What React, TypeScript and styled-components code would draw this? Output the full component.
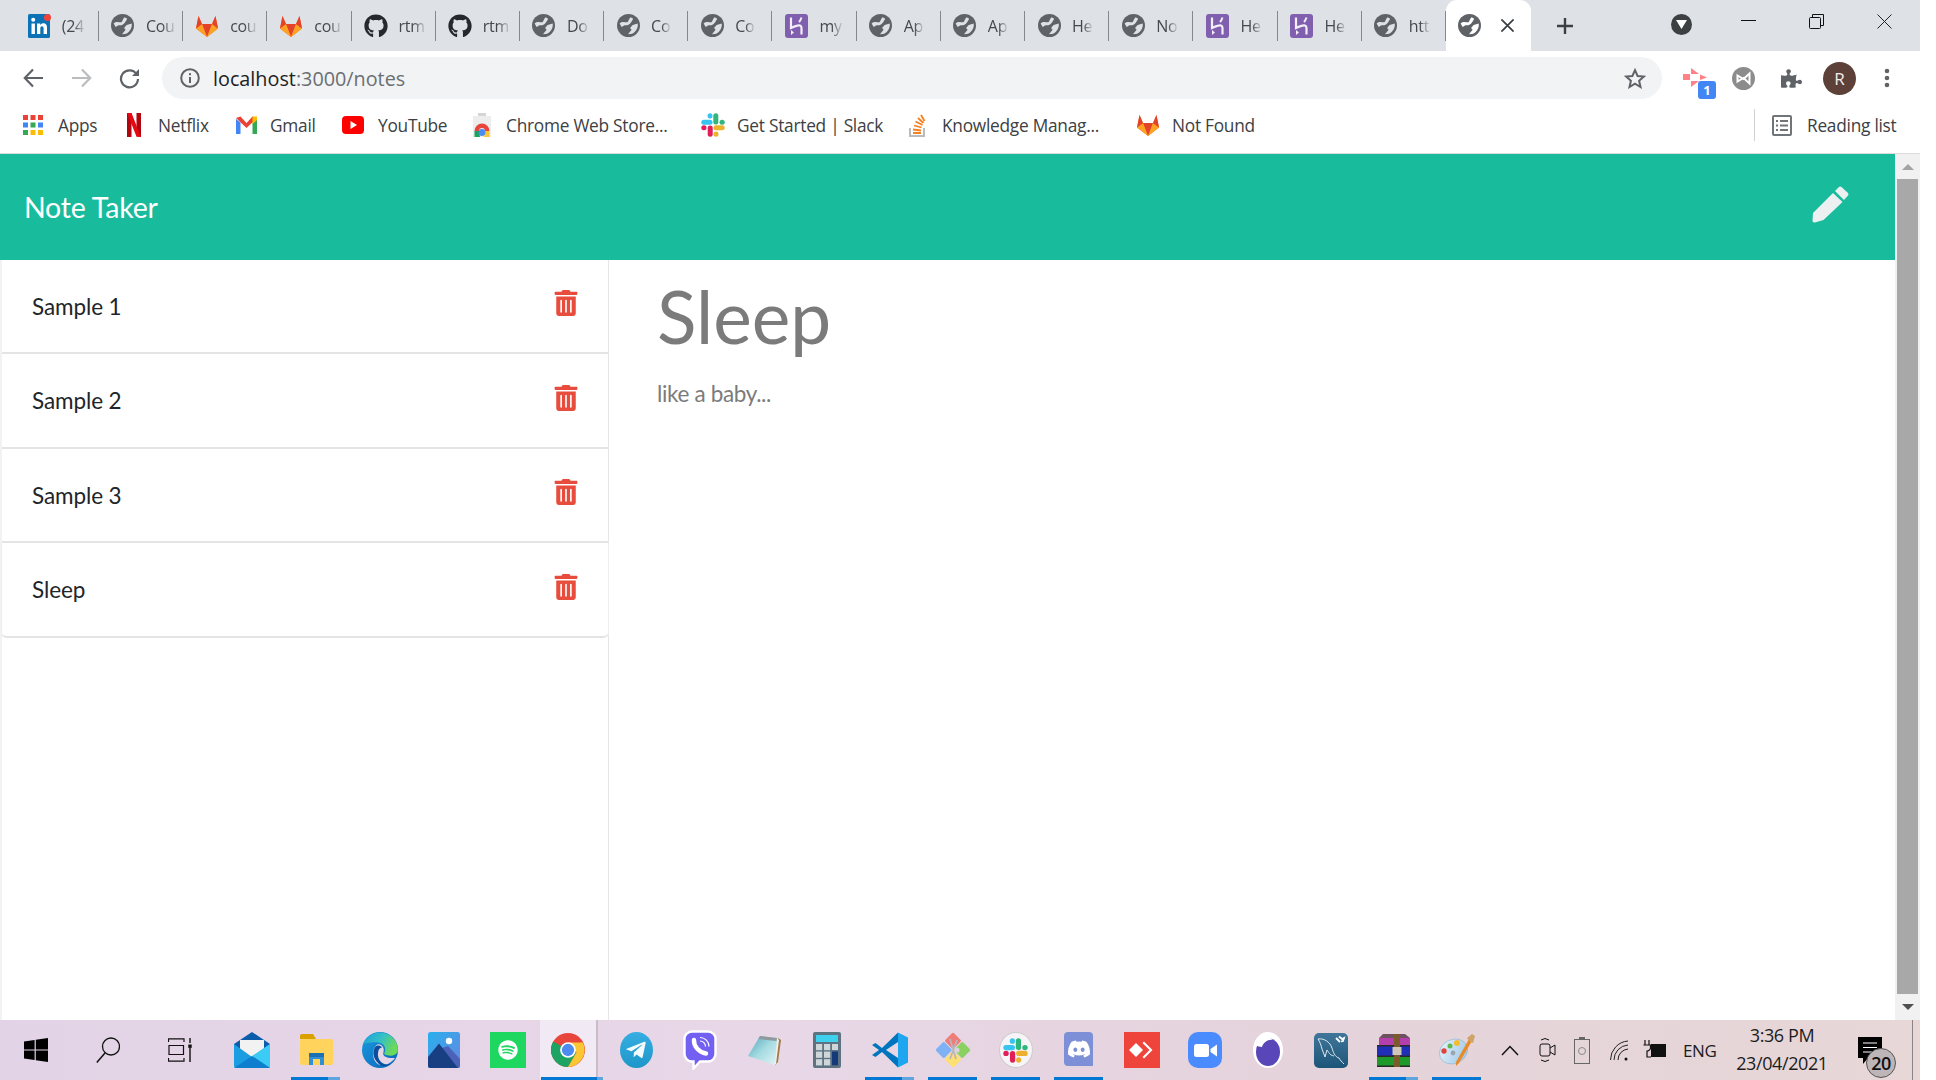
import React from "react";
import styled, { createGlobalStyle } from "styled-components";
import { FaGithub, FaTrashAlt, FaPuzzlePiece, FaSpotify, FaDiscord, FaTelegramPlane } from "react-icons/fa";

const GlobalStyle = createGlobalStyle`
  html, body { margin: 0; padding: 0; background: #fff; }
  #root { width: 1920px; height: 1080px; overflow: hidden; }
`;

const UI = `"Open Sans", "Noto Sans", sans-serif`;
const PAGE = `Lato, "Open Sans", sans-serif`;

const Screen = styled.div`
  width: 1920px; height: 1080px; display: flex; flex-direction: column; font-family: ${UI};
`;
const TabStrip = styled.div`
  height: 51px; background: #dee1e6; display: flex; align-items: flex-start; padding-left: 14.8px; box-sizing: border-box;
`;
const Tab = styled.div`
  width: 84.2px; height: 51px; box-sizing: border-box; flex: none; display: flex; align-items: center; padding-left: 12px; gap: 11px;
  position: relative;
  &::after { content: ""; position: absolute; right: 0; top: 11px; height: 30px; width: 1px; background: #85888d; }
`;
const ActiveTab = styled.div`
  width: 85px; height: 51px; flex: none; box-sizing: border-box; background: #fff; border-radius: 11px 11px 0 0; display: flex; align-items: center;
  padding-left: 12px; gap: 19px; color: #3c4043;
`;
const TabTitle = styled.span`
  font-size: 16px; color: #45494e; white-space: nowrap; letter-spacing: -0.3px;
  -webkit-mask-image: linear-gradient(to right, #000 55%, rgba(0,0,0,.15) 100%); mask-image: linear-gradient(to right, #000 55%, rgba(0,0,0,.15) 100%);
`;
const FavSlot = styled.span`
  position: relative; width: 24px; height: 24px; flex: none; display: flex; align-items: center; justify-content: center; color: #24292e;
`;
const RedDot = styled.span`
  position: absolute; right: 0; top: 0; width: 7px; height: 7px; border-radius: 50%; background: #f0433a;
`;
const NewTab = styled.div`
  margin-left: 25px; height: 51px; display: flex; align-items: center; color: #3c4043;
`;
const StripSpacer = styled.div`
  width: 96.8px; flex: none;
`;
const TabSearch = styled.div`
  width: 21px; height: 21px; margin-top: 14px; border-radius: 50%; background: #3c4043; display: flex; align-items: center; justify-content: center; flex: none;
`;
const WinButtons = styled.div`
  margin-left: 49px; display: flex; align-items: center; height: 43px; gap: 53px; flex: none;
`;
const MinimizeSlot = styled.span`
  display: flex; margin-top: -3px;
`;
const Toolbar = styled.div`
  height: 51px; background: #fff; display: flex; align-items: center; box-sizing: border-box; padding: 3px 0 0 23px;
`;
const NavBtn = styled.span<{ $gap?: number }>`
  display: flex; margin-right: ${(p) => p.$gap ?? 27}px; flex: none;
`;
const Omnibox = styled.div`
  width: 1500px; height: 42px; border-radius: 21px; background: #f1f3f4; display: flex; align-items: center;
  box-sizing: border-box; padding: 0 16px 0 18px; flex: none;
`;
const UrlText = styled.span`
  margin-left: 13px; font-size: 19.8px; color: #6b6f73; flex: 1;
`;
const UrlHost = styled.span`
  color: #202124;
`;
const ToolIcons = styled.div`
  display: flex; align-items: center; margin-left: 19px;
`;
const ExtSlot = styled.span<{ $w: number; $pr?: number }>`
  position: relative; width: ${(p) => p.$w}px; padding-right: ${(p) => p.$pr ?? 0}px; box-sizing: border-box; display: flex; justify-content: center; align-items: center; flex: none;
`;
const ExtBadge = styled.span`
  position: absolute; right: 1px; bottom: -11px; width: 18px; height: 18px; border-radius: 3px; background: #4285f4; color: #fff;
  font: 700 13px/18px ${UI}; text-align: center;
`;
const Avatar = styled.span`
  width: 33px; height: 33px; border-radius: 50%; background: #5d4037; color: #f3ecea; font-size: 17px; display: flex; align-items: center; justify-content: center; flex: none;
`;
const Bookmarks = styled.div`
  height: 52px; box-sizing: border-box; background: #fff; border-bottom: 1px solid #dcdcdc; display: flex; align-items: center; padding: 0 0 5px 23px;
`;
const Bookmark = styled.div<{ $gap: number; $w: number }>`
  display: flex; align-items: center; width: ${(p) => p.$w}px; flex: none; font-size: 17.3px; color: #3c4043; letter-spacing: -0.25px; white-space: nowrap;
  span:first-child { margin-right: ${(p) => p.$gap}px; display: flex; }
`;
const ReadingList = styled.div`
  margin-left: auto; width: 166px; box-sizing: border-box; height: 32px; display: flex; align-items: center; border-left: 1px solid #cfd1d4; padding-left: 17px;
  gap: 15px; font-size: 17.3px; letter-spacing: -0.25px; color: #3c4043; white-space: nowrap;
`;
const PageArea = styled.div`
  height: 866px; display: flex; flex: none;
`;
const AppColumn = styled.div`
  width: 1895px; display: flex; flex-direction: column; flex: none; background: #fff; font-family: ${PAGE};
`;
const NavBar = styled.header`
  height: 106px; flex: none; background: #18bc9c; display: flex; justify-content: space-between; align-items: flex-start; box-sizing: border-box;
  padding: 32px 46px 0 24px;
`;
const Brand = styled.h1`
  margin: 1px 0 0; font: 400 28.5px/40px ${PAGE}; color: #fff; letter-spacing: -0.2px;
`;
const PencilBtn = styled.span`
  display: flex;
`;
const Workspace = styled.main`
  flex: 1; display: flex; min-height: 0;
`;
const Sidebar = styled.aside`
  width: 609px; flex: none; box-sizing: border-box; border-right: 1px solid #e6e6e6; border-left: 2px solid #f2f2f2;
`;
const NoteRow = styled.div<{ $h: number; $last?: boolean }>`
  height: ${(p) => p.$h}px; box-sizing: border-box; border-bottom: 2px solid #e4e4e4; display: flex; align-items: center; justify-content: space-between;
  padding: 0 29px 0 30px; font-size: 22.5px; color: #212529; letter-spacing: -0.1px;
  border-radius: ${(p) => (p.$last ? "0 0 5px 5px" : "0")};
  ${(p) => p.$last && "box-shadow: 1px 0 0 #eee, -1px 0 0 #eee;"}
`;
const TrashBtn = styled.span`
  color: #e74c3c; font-size: 26px; display: flex; margin-top: -6px;
`;
const NoteView = styled.article`
  flex: 1; padding: 0 0 0 48px;
`;
const NoteTitle = styled.h2`
  margin: 14px 0 0; font: 400 73px/85px ${PAGE}; color: #7b7b7b;
`;
const NoteBody = styled.p`
  margin: 19px 0 0; font: 400 22.5px/32px ${PAGE}; color: #7b7b7b; letter-spacing: -0.35px;
`;
const ScrollTrack = styled.div`
  width: 25px; flex: none; background: #f1f1f1; display: flex; flex-direction: column; align-items: center; box-sizing: border-box;
`;
const ScrollArrow = styled.div<{ $up?: boolean }>`
  width: 0; height: 0; flex: none; border-left: 6px solid transparent; border-right: 6px solid transparent;
  ${(p) => (p.$up ? "border-bottom: 6px solid #a3a3a3; margin: 10px 0 9px;" : "border-top: 6px solid #505050; margin: 10px 0 0;")}
`;
const ScrollThumb = styled.div`
  width: 21px; height: 815px; flex: none; background: #a8a8a8;
`;
const Taskbar = styled.footer`
  height: 60px; flex: none; position: relative; display: flex; align-items: center;
  background: linear-gradient(90deg, #e2d3e6 0%, #e8d7e7 40%, #e4d3da 70%, #e7d7d7 100%);
`;
const StartCell = styled.div`
  width: 72px; flex: none; display: flex; justify-content: center; align-items: center; height: 60px;
`;
const AppCell = styled.div<{ $w: number; $active?: boolean; $after?: number }>`
  width: ${(p) => p.$w}px; margin-right: ${(p) => p.$after ?? 0}px; flex: none; height: 60px; display: flex; justify-content: center; align-items: center; position: relative;
  ${(p) => p.$active && "background: #f1e9f3; box-sizing: border-box; border-right: 2px solid #c9bdcb;"}
`;
const RunLine = styled.span<{ $split?: boolean; $chrome?: boolean }>`
  position: absolute; left: ${(p) => (p.$chrome ? 1 : 7)}px; bottom: 0; height: 3px; width: ${(p) => (p.$chrome ? 62 : 49)}px;
  background: ${(p) => (p.$split ? "linear-gradient(90deg, #0078d4 76%, #5ea5e0 76%)" : p.$chrome ? "linear-gradient(90deg, #0078d4 90%, #5ea5e0 90%)" : "#0078d4")};
`;
const TaskGap = styled.div`
  width: 4px; flex: none;
`;
const Tray = styled.div`
  display: flex; align-items: center; flex: none; height: 60px; color: #111;
`;
const TrayItem = styled.span<{ $ml: number }>`
  margin-left: ${(p) => p.$ml}px; display: flex; flex: none;
`;
const Lang = styled.span`
  font-size: 17px; color: #1c1c1c; width: 33px; margin-left: 16px; text-align: center; letter-spacing: -0.4px; flex: none;
`;
const Clock = styled.div`
  width: 110px; margin-left: 11px; text-align: center; font-size: 18px; line-height: 28px; color: #1c1c1c; flex: none; letter-spacing: -0.4px; padding-bottom: 2px;
`;
const Notify = styled.div`
  position: relative; margin-left: 21px; width: 40px; height: 44px; box-sizing: border-box; padding-top: 9px; flex: none; display: flex;
`;
const NotifyCount = styled.span`
  position: absolute; left: 8px; top: 20px; width: 30px; height: 30px; border-radius: 50%; background: #bdb5b8; border: 1px solid #555; box-sizing: border-box;
  font-size: 18px; line-height: 28px; text-align: center; color: #111; letter-spacing: -0.6px; font-weight: 600;
`;
const EdgeLine = styled.span`
  position: absolute; right: 7px; top: 0; width: 1px; height: 60px; background: #8d8488;
`;

const Globe = ({ bg = "#dee1e6" }: { bg?: string }) => (
  <svg width="23" height="23" viewBox="0 0 22 22">
    <circle cx="11" cy="11" r="11" fill="#5f6368" />
    <path d="M2.5 9 C5 6.5 8 8 10 8 C11 7 11 5 13 3 L15.5 4.5 C14 7 13 9.5 10.5 10.5 C9 11.5 8 9.5 4.5 12.5 Z" fill={bg} />
    <path d="M19.8 9 L15 10.5 L12.5 13.5 L14 15 L10.5 19.3 L14.5 18.8 C18 17 20.5 13 19.8 9 Z" fill={bg} />
  </svg>
);
const GitLab = ({ s = 24 }: { s?: number }) => (
  <svg width={s} height={s} viewBox="0 0 24 24">
    <path d="M12 23 L1 14.5 L3.5 2 L7 10 H17 L20.5 2 L23 14.5 Z" fill="#fc6d26" />
    <path d="M12 23 L7 10 H17 Z" fill="#e24329" />
    <path d="M1 14.5 L7 10 L12 23 Z M23 14.5 L17 10 L12 23 Z" fill="#fca326" />
    <path d="M3.5 2 L7 10 L1 14.5 Z M20.5 2 L17 10 L23 14.5 Z" fill="#e24329" />
  </svg>
);
const Heroku = () => (
  <svg width="23" height="24" viewBox="0 0 23 24">
    <rect width="23" height="24" rx="3" fill="#7f5fae" />
    <path d="M6 3.5 V14 C9 12.5 13 11 15 11.5 C16.5 12 16.5 13 16.5 14 V20.5" fill="none" stroke="#f3eef8" strokeWidth="2.2" />
    <path d="M14 8 C15.5 6.5 16 5 16.5 3.5" fill="none" stroke="#f3eef8" strokeWidth="2" />
    <path d="M6 16 L9 18.5 L6 21 Z" fill="#f3eef8" />
  </svg>
);
const LinkedIn = () => (
  <svg width="22" height="24" viewBox="0 0 22 24">
    <rect width="22" height="24" rx="1.5" fill="#0a72b5" />
    <rect x="3.5" y="9.5" width="3.4" height="10.5" fill="#fff" />
    <circle cx="5.2" cy="5.8" r="2" fill="#fff" />
    <path d="M9 9.5 H12.2 V11 C13 9.8 14.2 9.3 15.5 9.3 C18 9.3 19 11 19 13.5 V20 H15.6 V14.3 C15.6 13 15 12.2 14 12.2 C13 12.2 12.3 13 12.3 14.3 V20 H9 Z" fill="#fff" />
  </svg>
);
const GithubFav = () => <FaGithub size={24} />;

const Netflix = () => (
  <svg width="14" height="24" viewBox="0 0 14 24">
    <path d="M0 0 H4.5 V24 L0 24 Z M9.5 0 H14 V24 L9.5 23.5 Z" fill="#b1060f" />
    <path d="M0 0 H4.5 L14 24 L9.5 23.5 Z" fill="#e50914" />
  </svg>
);
const Gmail = () => (
  <svg width="21" height="18" viewBox="0 0 21 18">
    <path d="M0 3 V18 H4.5 V6.5 Z" fill="#4285f4" />
    <path d="M21 3 V18 H16.5 V6.5 Z" fill="#34a853" />
    <path d="M0 2 L4.5 0.5 L10.5 7 L16.5 0.5 L21 2 L10.5 12 Z" fill="#ea4335" />
    <path d="M16.5 0.5 L21 0.5 V4 L16.5 8 Z" fill="#fbbc04" />
  </svg>
);
const YouTube = () => (
  <svg width="22" height="18" viewBox="0 0 22 18">
    <rect width="22" height="18" rx="4" fill="#f00" />
    <path d="M8.5 5 L15 9 L8.5 13 Z" fill="#fff" />
  </svg>
);
const ChromeMark = ({ s = 20 }: { s?: number }) => (
  <svg width={s} height={s} viewBox="0 0 32 32">
    <circle cx="16" cy="16" r="16" fill="#e8453c" />
    <path d="M16 16 L2.1 8 A16 16 0 0 0 16 32 L24 18 Z" fill="#1da462" />
    <path d="M16 9 H30 A16 16 0 0 1 16 32 L24 18 Z" fill="#f9c733" />
    <circle cx="16" cy="16" r="7.4" fill="#fff" />
    <circle cx="16" cy="16" r="5.8" fill="#4d8bf0" />
  </svg>
);
const StoreBag = () => (
  <svg width="18" height="24" viewBox="0 0 18 24">
    <path d="M5 0 H13 V3 H5 Z" fill="#d5d5d5" />
    <rect y="3" width="18" height="21" fill="#ededed" />
    <path d="M1.5 18 A7.5 7.5 0 0 1 16.5 18 H12 A3 3 0 0 0 6 18 Z" fill="#e8453c" />
    <path d="M1.5 18 H6 L7 24 H1.5 Z" fill="#1da462" />
    <path d="M12 18 H16.5 V24 H11 Z" fill="#f9c733" />
    <circle cx="9" cy="19.5" r="3.4" fill="#4d8bf0" />
  </svg>
);
const SlackMark = ({ s = 24 }: { s?: number }) => (
  <svg width={s} height={s} viewBox="0 0 24 24">
    <g strokeWidth="5" strokeLinecap="round" fill="none">
      <path d="M2.8 9.2 H9" stroke="#36c5f0" />
      <path d="M9 2.8 V3" stroke="#36c5f0" />
      <path d="M14.8 2.8 V9" stroke="#2eb67d" />
      <path d="M21.2 9.2 H21" stroke="#2eb67d" />
      <path d="M15 14.8 H21.2" stroke="#ecb22e" />
      <path d="M15 21.2 V21" stroke="#ecb22e" />
      <path d="M9.2 15 V21.2" stroke="#e01e5a" />
      <path d="M2.8 14.8 H3" stroke="#e01e5a" />
    </g>
  </svg>
);
const StackO = () => (
  <svg width="17" height="24" viewBox="0 0 17 24">
    <path d="M1 15 V23 H15 V15" fill="none" stroke="#bcbbbb" strokeWidth="2" />
    <path d="M4 20 H12 M4 16.5 L12 17.5 M5 12.5 L12.5 14.5 M6.5 8.5 L13.5 12 M9 5 L14.5 10 M12 2 L15.5 8" stroke="#f48024" strokeWidth="1.8" />
  </svg>
);
const AppsGrid = () => (
  <svg width="20" height="20" viewBox="0 0 20 20">
    {["#ea4335", "#ea4335", "#ea4335", "#4285f4", "#34a853", "#4285f4", "#34a853", "#fbbc04", "#fbbc04"].map((c, i) => (
      <rect key={i} x={(i % 3) * 7.5} y={Math.floor(i / 3) * 7.5} width="5" height="5" fill={c} />
    ))}
  </svg>
);
const ReadIcon = () => (
  <svg width="20" height="21" viewBox="0 0 20 21">
    <rect x="1" y="1" width="18" height="19" rx="1" fill="none" stroke="#70757a" strokeWidth="2" />
    <path d="M4 6 H6 M8 6 H16 M4 10.5 H6 M8 10.5 H16 M4 15 H6 M8 15 H16" stroke="#70757a" strokeWidth="2" />
  </svg>
);
const Back = () => (
  <svg width="21" height="20" viewBox="0 0 21 20">
    <path d="M20 10 H2 M10 1.5 L1.8 10 L10 18.5" fill="none" stroke="#5f6368" strokeWidth="2.2" />
  </svg>
);
const Forward = () => (
  <svg width="21" height="20" viewBox="0 0 21 20">
    <path d="M1 10 H19 M11 1.5 L19.2 10 L11 18.5" fill="none" stroke="#babcbe" strokeWidth="2.2" />
  </svg>
);
const Reload = () => (
  <svg width="21" height="21" viewBox="0 0 21 21">
    <path d="M17.5 6 A8.5 8.5 0 1 0 19 11" fill="none" stroke="#5f6368" strokeWidth="2.2" />
    <path d="M20 1 V8 H13 Z" fill="#5f6368" />
  </svg>
);
const Info = () => (
  <svg width="20" height="20" viewBox="0 0 20 20">
    <circle cx="10" cy="10" r="8.8" fill="none" stroke="#5f6368" strokeWidth="2" />
    <rect x="9" y="9" width="2" height="6" fill="#5f6368" />
    <rect x="9" y="5.2" width="2" height="2" fill="#5f6368" />
  </svg>
);
const Star = () => (
  <svg width="22" height="21" viewBox="0 0 22 21">
    <path d="M11 2.2 L13.6 8 L19.8 8.6 L15.1 12.8 L16.5 19 L11 15.7 L5.5 19 L6.9 12.8 L2.2 8.6 L8.4 8 Z" fill="none" stroke="#5f6368" strokeWidth="2" />
  </svg>
);
const PinkExt = () => (
  <svg width="24" height="20" viewBox="0 0 24 20">
    <path d="M0 6 H7 V12 H0 Z M8 0 L16 6 H8 Z M8 19 L16 13 H8 Z M17 6.5 L24 9.5 L17 12 Z" fill="#ff8087" />
  </svg>
);
const GrayExt = () => (
  <svg width="23" height="23" viewBox="0 0 23 23">
    <circle cx="11.5" cy="11.5" r="11.5" fill="#8c8c8c" />
    <path d="M5.5 8.5 L11.5 12 L17.5 6.5 V16.5 L11.5 11 L5.5 14.5 Z" fill="none" stroke="#fff" strokeWidth="2" />
  </svg>
);
const Dots = () => (
  <svg width="6" height="20" viewBox="0 0 6 20">
    <circle cx="3" cy="3" r="2.3" fill="#5f6368" /><circle cx="3" cy="10" r="2.3" fill="#5f6368" /><circle cx="3" cy="17" r="2.3" fill="#5f6368" />
  </svg>
);
const Plus = () => (
  <svg width="18" height="18" viewBox="0 0 18 18">
    <path d="M9 1 V17 M1 9 H17" stroke="#3c4043" strokeWidth="2.4" />
  </svg>
);
const CloseX = ({ s = 15, w = 1, c = "#222" }: { s?: number; w?: number; c?: string }) => (
  <svg width={s} height={s} viewBox="0 0 15 15">
    <path d="M0.5 0.5 L14.5 14.5 M14.5 0.5 L0.5 14.5" stroke={c} strokeWidth={w} />
  </svg>
);
const Restore = () => (
  <svg width="15" height="15" viewBox="0 0 15 15">
    <path d="M3.5 3.5 V0.5 H14.5 V11.5 H11.5" fill="none" stroke="#111" />
    <rect x="0.5" y="3.5" width="11" height="11" rx="1" fill="none" stroke="#111" />
  </svg>
);
const Minimize = () => (
  <svg width="15" height="15" viewBox="0 0 15 15"><path d="M0 7.5 H15" stroke="#111" /></svg>
);
const DownTri = () => (
  <svg width="11" height="9" viewBox="0 0 11 9"><path d="M0 0 H11 L5.5 9 Z" fill="#fff" /></svg>
);
const PencilMark = () => (
  <svg width="37" height="37" viewBox="0 0 37 37">
    <path d="M23 5 L27 1 Q28 0 29.5 1 L36 7 Q37 8.5 36 9.5 L32 14 Z" fill="#ecf0f1" />
    <path d="M21 7 L30.5 16 L11.5 34 L3 36.5 Q0.3 37 0.5 34.5 L1 27 Z" fill="#ecf0f1" />
  </svg>
);

const WinLogo = () => (
  <svg width="24" height="24" viewBox="0 0 24 24">
    <path d="M0 3.4 L10.6 1.9 V11.4 H0 Z M11.8 1.7 L24 0 V11.4 H11.8 Z M0 12.6 H10.6 V22.1 L0 20.6 Z M11.8 12.6 H24 V24 L11.8 22.3 Z" fill="#000" />
  </svg>
);
const SearchIco = () => (
  <svg width="24" height="26" viewBox="0 0 24 26">
    <circle cx="15" cy="9.5" r="8.5" fill="none" stroke="#111" strokeWidth="1.3" />
    <path d="M9 16 L0.8 25.5" stroke="#111" strokeWidth="1.5" />
  </svg>
);
const TaskView = () => (
  <svg width="24" height="24" viewBox="0 0 24 24">
    <path d="M0.5 4 V0.8 H16 V4 M0.5 20 V23.2 H16 V20 M1 7.5 H15.5 V16.5 H1 Z" fill="none" stroke="#111" strokeWidth="1.2" />
    <path d="M22 0 V5 M22 10 V24" stroke="#111" strokeWidth="1.4" /><rect x="20.3" y="6.5" width="3.4" height="3.4" fill="#111" />
  </svg>
);
const MailIco = () => (
  <svg width="36" height="36" viewBox="0 0 36 36">
    <path d="M0 12 L18 0 L36 12 V20 H0 Z" fill="#0b5cab" />
    <path d="M6 8 H30 V20 L18 27 L6 20 Z" fill="#f2f2f2" />
    <path d="M0 12 L18 25 L36 12 V34 A2 2 0 0 1 34 36 H2 A2 2 0 0 1 0 34 Z" fill="#1b9de2" />
    <path d="M36 12 V36 L18 24 Z" fill="#3ccbf4" />
    <path d="M0 36 L18 24 L36 36 Z" fill="#0e7fce" />
  </svg>
);
const FolderIco = () => (
  <svg width="33" height="34" viewBox="0 0 33 34">
    <path d="M0 3 A2 2 0 0 1 2 1 H13 L16 6 H0 Z" fill="#d9a000" />
    <rect y="6" width="33" height="26" rx="2" fill="#ffd35c" />
    <path d="M9 32 V20 H24 V32 H20 V26 H13 V32 Z" fill="#2d8fd6" />
    <path d="M9 20 H24 V24 H9 Z" fill="#1b6fb5" />
  </svg>
);
const EdgeIco = () => (
  <svg width="36" height="36" viewBox="0 0 36 36">
    <defs>
      <linearGradient id="edgeTop" x1="0" y1="0" x2="1" y2="0.4">
        <stop offset="0" stopColor="#1c9fdc" /><stop offset="0.55" stopColor="#35c1c4" /><stop offset="1" stopColor="#6bd95a" />
      </linearGradient>
      <linearGradient id="edgeBody" x1="0" y1="0" x2="1" y2="1">
        <stop offset="0" stopColor="#1b9be0" /><stop offset="1" stopColor="#0a63b8" />
      </linearGradient>
    </defs>
    <circle cx="18" cy="18" r="18" fill="url(#edgeBody)" />
    <path d="M1 12 C5 2 18 -3 27 3 C34 7 37 15 35.5 20 C33 25 26 24 22 22 C25 16 22 11 16 10.5 C10 10 5 11 1 12 Z" fill="url(#edgeTop)" />
    <path d="M14 13.5 C18 10 23 15 21.5 20 C20 24 24 26.5 33 26 C28 33 20 35 15 31.5 C10 27 10 18 14 13.5 Z" fill="#e4d5e7" />
    <path d="M13.5 14.5 C9.5 20 11 29 20 34 C22 34.5 26 34 28 32 C21 34 15 28 16 21 C16.5 18 17 16 20 15.5 C18 13 15 13 13.5 14.5 Z" fill="#0b4f9c" />
  </svg>
);
const PhotosIco = () => (
  <svg width="32" height="36" viewBox="0 0 32 36">
    <defs>
      <linearGradient id="photoSky" x1="0" y1="0" x2="1" y2="1">
        <stop offset="0" stopColor="#27b0ee" /><stop offset="1" stopColor="#6a86e0" />
      </linearGradient>
    </defs>
    <rect width="32" height="36" rx="2.5" fill="url(#photoSky)" />
    <circle cx="21" cy="9" r="3.2" fill="#fff" />
    <path d="M14 16 L20 14 L32 27 V34 A2 2 0 0 1 30 36 H20 Z" fill="#4c62b8" />
    <path d="M0 34 V25 L11 11.5 L30 36 H2 A2 2 0 0 1 0 34 Z" fill="#173f82" />
  </svg>
);
const SpotifyIco = styled.span`
  width: 36px; height: 36px; background: #1ed760; display: flex; align-items: center; justify-content: center; color: #fff; font-size: 20px;
`;
const TelegramIco = styled.span`
  width: 33px; height: 36px; border-radius: 50%; background: linear-gradient(#37aee2, #1e96c8); display: flex; align-items: center; justify-content: center; color: #f4fbff; font-size: 22px;
`;
const ViberIco = () => (
  <svg width="34" height="40" viewBox="0 0 34 40">
    <path d="M9 1.5 H25 A7.5 7.5 0 0 1 32.5 9 V24 A7.5 7.5 0 0 1 25 31.5 H17 L10.5 38.5 V31.5 H9 A7.5 7.5 0 0 1 1.5 24 V9 A7.5 7.5 0 0 1 9 1.5 Z" fill="#7360f2" stroke="#fff" strokeWidth="2.4" />
    <path d="M11 10 C10.5 16 16 22.5 23 23.5" fill="none" stroke="#fff" strokeWidth="4.4" strokeLinecap="round" />
    <path d="M17 7.5 A9 9 0 0 1 26 16.5 M17 11 A5.5 5.5 0 0 1 22.5 16.5" fill="none" stroke="#fff" strokeWidth="1.2" />
  </svg>
);
const NotepadIco = () => (
  <svg width="34" height="31" viewBox="0 0 34 31">
    <defs>
      <linearGradient id="padFace" x1="0" y1="0" x2="1" y2="1">
        <stop offset="0" stopColor="#4fa3b8" /><stop offset="0.5" stopColor="#a5dbe2" /><stop offset="1" stopColor="#e4f3f5" />
      </linearGradient>
    </defs>
    <path d="M31 3 L34 5 L31 27 L28 30 Z" fill="#a07c48" />
    <path d="M30 3 L32 5 L29 29 L26 30 Z" fill="#f1f1ea" />
    <path d="M13 1 L30 3 L28 30 L1 21 Z" fill="url(#padFace)" />
    <path d="M13 1 L30 3 L29.5 6 L11.5 4 Z" fill="#8f9a9e" />
  </svg>
);
const CalcIco = () => (
  <svg width="28" height="36" viewBox="0 0 28 36">
    <rect width="28" height="36" rx="2" fill="#5e7382" />
    <rect x="3" y="3" width="22" height="7" fill="#3fd0ee" />
    {[0, 1, 2].flatMap((r) => [0, 1].map((c) => (
      <rect key={`${r}${c}`} x={3 + c * 8} y={12 + r * 7.6} width="6.2" height="6.2" fill="#cfd6da" />
    )))}
    <rect x="19" y="12" width="6" height="6" fill="#cfd6da" />
    <rect x="19" y="19.5" width="6" height="13.8" fill="#143a7a" />
  </svg>
);
const VSCodeIco = () => (
  <svg width="36" height="36" viewBox="0 0 36 36">
    <path d="M26 0.5 L10 16 L3.5 11 L0 13 L7 18 L0 23 L3.5 25 L10 20 L26 35.5 V26 L14 18 L26 10 Z" fill="#0075bf" />
    <path d="M26 0.5 L36 5.5 V30.5 L26 35.5 Z" fill="#1fa6f0" />
  </svg>
);
const GitExtIco = () => (
  <svg width="36" height="36" viewBox="0 0 36 36">
    <g transform="rotate(45 18 18)">
      <rect x="5.4" y="5.4" width="12.1" height="12.1" rx="1.5" fill="#f07c78" />
      <rect x="18.5" y="5.4" width="12.1" height="12.1" rx="1.5" fill="#8bd161" />
      <rect x="18.5" y="18.5" width="12.1" height="12.1" rx="1.5" fill="#fde072" />
      <rect x="5.4" y="18.5" width="12.1" height="12.1" rx="1.5" fill="#7fb1f5" />
    </g>
    <path d="M15 7 L21 27 M22 8 L15 27" stroke="#bdb5bd" strokeWidth="1.8" />
    <circle cx="22" cy="18" r="2.6" fill="#d8d4d8" />
  </svg>
);
const SlackRound = styled.span`
  width: 34px; height: 36px; border-radius: 50%; background: #f7f4f7; border: 1px solid #ccc; box-sizing: border-box; display: flex; align-items: center; justify-content: center;
`;
const DiscordIco = styled.span`
  width: 29px; height: 34px; border-radius: 4px 4px 0 4px; background: #7d8fd6; color: #fff; display: flex; align-items: center; justify-content: center; font-size: 24px; margin-top: -2px;
`;
const AnyIco = () => (
  <svg width="36" height="36" viewBox="0 0 36 36">
    <rect width="36" height="36" fill="#ef443b" />
    <path d="M12 11 L19 18 L12 25 L5 18 Z" fill="#fff" />
    <path d="M20 9.5 L28.5 18 L20 26.5 L18.5 25 L25.5 18 L18.5 11 Z" fill="#fff" />
  </svg>
);
const ZoomIco = () => (
  <svg width="34" height="36" viewBox="0 0 34 36">
    <rect width="34" height="36" rx="10" fill="#4a8cff" />
    <rect x="6" y="12" width="15" height="13" rx="2.5" fill="#fff" />
    <path d="M22.5 17 L29 12.5 V24.5 L22.5 20 Z" fill="#fff" />
  </svg>
);
const EclipseIco = () => (
  <svg width="30" height="36" viewBox="0 0 30 36">
    <ellipse cx="15" cy="18" rx="15" ry="18" fill="#fff" />
    <ellipse cx="15" cy="20" rx="12" ry="14" fill="#5946b8" />
    <path d="M2.5 13 C6 5 15 3 20 8 C15 7 10 11 9 15 C7 15 4 14 2.5 13 Z" fill="#fff" />
  </svg>
);
const MysqlIco = () => (
  <svg width="34" height="35" viewBox="0 0 34 35">
    <defs>
      <linearGradient id="myBg" x1="0" y1="0" x2="0" y2="1">
        <stop offset="0" stopColor="#3f7699" /><stop offset="1" stopColor="#1d5578" />
      </linearGradient>
    </defs>
    <rect width="34" height="35" rx="5" fill="url(#myBg)" />
    <path d="M4 6 C10 5 16 9 18 15 C19 19 21 24 25 25 C26 27 28 29 30 31 M4 6 C6 9 7 12 8 16 C9 19 10 21 11 24 L13 17 C15 19 15 22 20 23" fill="none" stroke="#dfe9ef" strokeWidth="1" />
    <path d="M22 5 L26 9 M25 3.5 L28 6 L30 5 L29 8 L27 8.5" fill="none" stroke="#fff" strokeWidth="1.8" />
  </svg>
);
const WinRar = () => (
  <svg width="33" height="34" viewBox="0 0 33 34">
    <path d="M2 5 L6 1 H28 L33 5 H9 Z" fill="#6d5260" />
    <path d="M2 5 H33 V12 H2 Z" fill="#b63fae" />
    <path d="M0 13 H33 V23 H0 Z" fill="#1f2fb8" />
    <path d="M0 24 H33 V33 H0 Z" fill="#1f9a2a" />
    <path d="M0 12 H33 V13.5 H0 Z M0 22.5 H33 V24 H0 Z M0 32.5 H33 V34 H0 Z" fill="#2a2a2a" />
    <rect x="17" y="1" width="6" height="33" fill="#7b5a2b" />
    <rect x="15.5" y="14" width="9" height="8" fill="#cfc8b8" />
  </svg>
);
const PaintIco = () => (
  <svg width="36" height="33" viewBox="0 0 36 33">
    <defs>
      <linearGradient id="palette" x1="0" y1="0" x2="1" y2="1">
        <stop offset="0" stopColor="#edf6fc" /><stop offset="1" stopColor="#93c3e6" />
      </linearGradient>
    </defs>
    <ellipse cx="14.5" cy="17.5" rx="14.5" ry="12" transform="rotate(-25 14.5 17.5)" fill="url(#palette)" stroke="#8fb6d3" strokeWidth=".6" />
    <circle cx="5" cy="17" r="2.7" fill="#e0453c" /><circle cx="11" cy="12" r="2.5" fill="#5fb848" /><circle cx="18" cy="9" r="3" fill="#f4bd2e" /><circle cx="14" cy="19" r="2.4" fill="#9aa6ad" />
    <path d="M30 5 L33 7 L20 29 L17 32 L17 28 Z" fill="#ea8a27" />
    <path d="M28 4 L33 0 L36 2 L34 9 L31 8 Z" fill="#cfa468" />
  </svg>
);
const Chevron = () => (
  <svg width="18" height="11" viewBox="0 0 18 11"><path d="M1 10 L9 1.5 L17 10" fill="none" stroke="#111" strokeWidth="1.5" /></svg>
);
const MeetIco = () => (
  <svg width="17" height="26" viewBox="0 0 17 26">
    <path d="M2 3 Q6 0 10 3 M2 23 Q6 26 10 23" fill="none" stroke="#111" />
    <rect x="1" y="7" width="10" height="12" rx="2" fill="none" stroke="#111" />
    <path d="M11 11 L16 8 V18 L11 15" fill="none" stroke="#111" />
  </svg>
);
const BatteryApp = () => (
  <svg width="16" height="27" viewBox="0 0 16 27">
    <rect x="0.5" y="2.5" width="15" height="24" fill="none" stroke="#666" />
    <rect x="5" y="0" width="6" height="2.5" fill="#666" />
    <circle cx="8" cy="14" r="3.5" fill="none" stroke="#888" />
  </svg>
);
const WifiIco = () => (
  <svg width="19" height="21" viewBox="0 0 19 21">
    <path d="M0.5 20 A19 19 0 0 1 18 1 M4 20 A15 15 0 0 1 18 5 M8 20 A11 11 0 0 1 18 9" fill="none" stroke="#222" strokeWidth="1" />
    <circle cx="16" cy="19" r="1.5" fill="#111" />
  </svg>
);
const PowerIco = () => (
  <svg width="25" height="21" viewBox="0 0 25 21">
    <path d="M3 0 V5 M7 0 V5 M1.5 5 H8.5 V8 C8.5 10 6 11 5 11 V17 H9" fill="none" stroke="#111" strokeWidth="1.2" />
    <rect x="9" y="4" width="15" height="13" fill="#111" />
  </svg>
);
const NotifyBubble = () => (
  <svg width="24" height="27" viewBox="0 0 24 27">
    <path d="M0 0 H24 V21 H10 L5 27 V21 H0 Z" fill="#000" />
    <path d="M5 6 H19 M5 10.5 H19 M5 15 H19" stroke="#fff" strokeWidth="1.2" />
  </svg>
);

const tabs: [string, React.ReactNode][] = [
  ["(24", <FavSlot key="l"><LinkedIn /><RedDot /></FavSlot>],
  ["Cou", <FavSlot key="a"><Globe /></FavSlot>],
  ["cou", <FavSlot key="b"><GitLab /></FavSlot>],
  ["cou", <FavSlot key="c"><GitLab /></FavSlot>],
  ["rtm", <FavSlot key="d"><GithubFav /></FavSlot>],
  ["rtm", <FavSlot key="e"><GithubFav /></FavSlot>],
  ["Do", <FavSlot key="f"><Globe /></FavSlot>],
  ["Co", <FavSlot key="g"><Globe /></FavSlot>],
  ["Co", <FavSlot key="h"><Globe /></FavSlot>],
  ["my", <FavSlot key="i"><Heroku /></FavSlot>],
  ["Ap", <FavSlot key="j"><Globe /></FavSlot>],
  ["Ap", <FavSlot key="k"><Globe /></FavSlot>],
  ["He", <FavSlot key="m"><Globe /></FavSlot>],
  ["No", <FavSlot key="n"><Globe /></FavSlot>],
  ["He", <FavSlot key="o"><Heroku /></FavSlot>],
  ["He", <FavSlot key="p"><Heroku /></FavSlot>],
  ["htt", <FavSlot key="q"><Globe /></FavSlot>],
];

const bookmarks: [string, React.ReactNode, number, number][] = [
  ["Apps", <AppsGrid key="1" />, 15, 104],
  ["Netflix", <Netflix key="2" />, 17, 109],
  ["Gmail", <Gmail key="3" />, 13, 106],
  ["YouTube", <YouTube key="4" />, 14, 131],
  ["Chrome Web Store...", <StoreBag key="5" />, 15, 228],
  ["Get Started | Slack", <SlackMark key="6" />, 12, 208],
  ["Knowledge Manag...", <StackO key="7" />, 16, 227],
  ["Not Found", <GitLab key="8" />, 12, 130],
];

const notes: [string, number][] = [["Sample 1", 94], ["Sample 2", 95], ["Sample 3", 94], ["Sleep", 95]];

type AppEntry = { icon: React.ReactNode; w?: number; run?: "solid" | "split" | "chrome"; after?: number };
const apps: AppEntry[] = [
  { icon: <MailIco />, w: 64 },
  { icon: <FolderIco />, w: 64, run: "split" },
  { icon: <EdgeIco />, w: 64 },
  { icon: <PhotosIco />, w: 64 },
  { icon: <SpotifyIco><FaSpotify /></SpotifyIco>, w: 64 },
  { icon: <ChromeMark s={34} />, w: 58, run: "chrome", after: 6 },
  { icon: <TelegramIco><FaTelegramPlane /></TelegramIco>, w: 64 },
  { icon: <ViberIco />, w: 64 },
  { icon: <NotepadIco /> },
  { icon: <CalcIco /> },
  { icon: <VSCodeIco />, run: "split" },
  { icon: <GitExtIco />, run: "solid" },
  { icon: <SlackRound><SlackMark s={25} /></SlackRound>, run: "solid" },
  { icon: <DiscordIco><FaDiscord /></DiscordIco>, run: "solid" },
  { icon: <AnyIco /> },
  { icon: <ZoomIco /> },
  { icon: <EclipseIco /> },
  { icon: <MysqlIco /> },
  { icon: <WinRar />, run: "split" },
  { icon: <PaintIco />, run: "solid" },
];

export default function App() {
  return (
    <Screen>
      <GlobalStyle />
      <TabStrip>
        {tabs.map(([t, icon], i) => (
          <Tab key={i}>{icon}<TabTitle>{t}</TabTitle></Tab>
        ))}
        <ActiveTab><FavSlot><Globe bg="#fff" /></FavSlot><CloseX s={13} w={2} c="#3c4043" /></ActiveTab>
        <NewTab><Plus /></NewTab>
        <StripSpacer />
        <TabSearch><DownTri /></TabSearch>
        <WinButtons><MinimizeSlot><Minimize /></MinimizeSlot><Restore /><CloseX /></WinButtons>
      </TabStrip>
      <Toolbar>
        <NavBtn><Back /></NavBtn>
        <NavBtn><Forward /></NavBtn>
        <NavBtn $gap={22}><Reload /></NavBtn>
        <Omnibox>
          <Info />
          <UrlText><UrlHost>localhost</UrlHost>:3000/notes</UrlText>
          <Star />
        </Omnibox>
        <ToolIcons>
          <ExtSlot $w={36} $pr={8}><PinkExt /><ExtBadge>1</ExtBadge></ExtSlot>
          <ExtSlot $w={52}><GrayExt /></ExtSlot>
          <ExtSlot $w={44}><FaPuzzlePiece size={21} color="#5f6368" /></ExtSlot>
          <ExtSlot $w={53}><Avatar>R</Avatar></ExtSlot>
          <ExtSlot $w={42}><Dots /></ExtSlot>
        </ToolIcons>
      </Toolbar>
      <Bookmarks>
        {bookmarks.map(([t, icon, gap, w]) => (
          <Bookmark key={t} $gap={gap} $w={w}><span>{icon}</span><span>{t}</span></Bookmark>
        ))}
        <ReadingList><ReadIcon />Reading list</ReadingList>
      </Bookmarks>
      <PageArea>
        <AppColumn>
          <NavBar>
            <Brand>Note Taker</Brand>
            <PencilBtn><PencilMark /></PencilBtn>
          </NavBar>
          <Workspace>
            <Sidebar>
              {notes.map(([n, h], i) => (
                <NoteRow key={n} $h={h} $last={i === notes.length - 1}>
                  {n}
                  <TrashBtn><FaTrashAlt /></TrashBtn>
                </NoteRow>
              ))}
            </Sidebar>
            <NoteView>
              <NoteTitle>Sleep</NoteTitle>
              <NoteBody>like a baby...</NoteBody>
            </NoteView>
          </Workspace>
        </AppColumn>
        <ScrollTrack>
          <ScrollArrow $up />
          <ScrollThumb />
          <ScrollArrow />
        </ScrollTrack>
      </PageArea>
      <Taskbar>
        <StartCell><WinLogo /></StartCell>
        <StartCell><SearchIco /></StartCell>
        <StartCell><TaskView /></StartCell>
        <TaskGap />
        {apps.map(({ icon, w, run, after }, i) => (
          <AppCell key={i} $w={w ?? 63} $active={run === "chrome"} $after={after}>
            {icon}
            {run ? <RunLine $split={run === "split"} $chrome={run === "chrome"} /> : null}
          </AppCell>
        ))}
        <Tray>
          <TrayItem $ml={13}><Chevron /></TrayItem>
          <TrayItem $ml={20}><MeetIco /></TrayItem>
          <TrayItem $ml={18}><BatteryApp /></TrayItem>
          <TrayItem $ml={20}><WifiIco /></TrayItem>
          <TrayItem $ml={13}><PowerIco /></TrayItem>
          <Lang>ENG</Lang>
          <Clock>3:36 PM<br />23/04/2021</Clock>
          <Notify><NotifyBubble /><NotifyCount>20</NotifyCount></Notify>
        </Tray>
        <EdgeLine />
      </Taskbar>
    </Screen>
  );
}
